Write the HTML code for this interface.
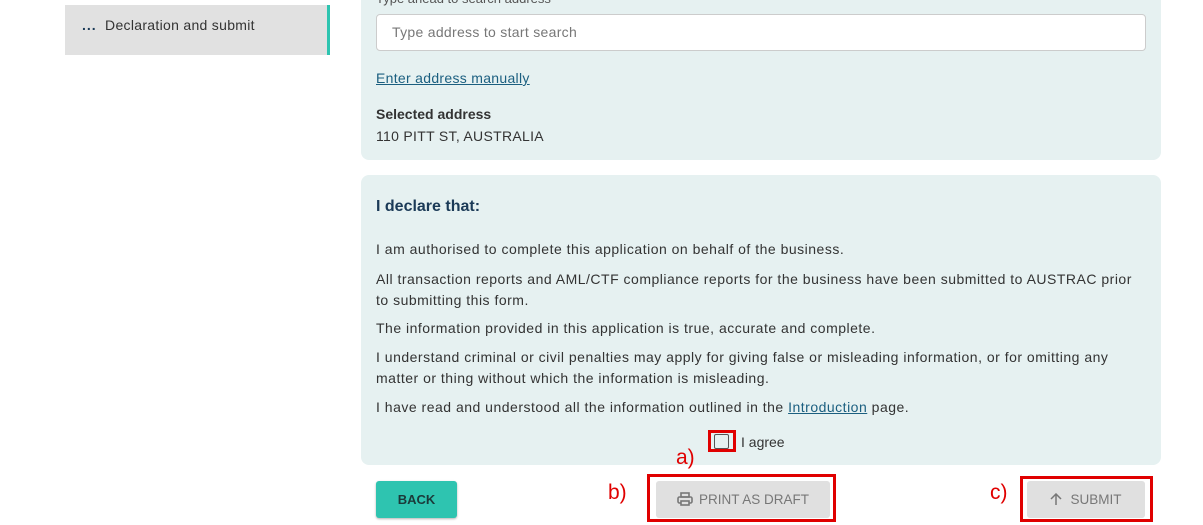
<!DOCTYPE html>
<html><head><style>
body{margin:0;width:1203px;height:525px;background:#fff;font-family:"Liberation Sans",sans-serif;position:relative;overflow:hidden;color:#333}
.a{position:absolute}
.panel{background:#e6f1f1;border-radius:8px}
p{margin:0;position:absolute;left:376px;font-size:14px;color:#333;line-height:21px;white-space:nowrap;letter-spacing:0.5px}
.red{border:3px solid #e00000;position:absolute;box-sizing:border-box}
.lab{position:absolute;color:#e00000;font-size:21px}
</style></head><body>
<div class="a" style="left:65px;top:5px;width:262px;height:50px;background:#e1e1e1"></div>
<div class="a" style="left:327px;top:5px;width:3px;height:50px;background:#2ec4b0"></div>
<div class="a" style="left:82px;top:17px;font-size:14px;color:#333;letter-spacing:0.3px"><b style="color:#1b3a57;letter-spacing:1px">...</b>&nbsp; Declaration and submit</div>

<div class="a panel" style="left:361px;top:-10px;width:800px;height:170px"></div>
<div class="a" style="left:376px;top:-9px;font-size:13px;color:#555">Type ahead to search address</div>
<div class="a" style="left:376px;top:14px;width:768px;height:35px;background:#fff;border:1px solid #ccc;border-radius:4px"></div>
<div class="a" style="left:392px;top:24px;font-size:14px;color:#777;letter-spacing:0.3px">Type address to start search</div>
<div class="a" style="left:376px;top:70px;font-size:14px;color:#1b5f80;text-decoration:underline;letter-spacing:0.3px">Enter address manually</div>
<div class="a" style="left:376px;top:106px;font-size:14px;font-weight:bold;color:#333">Selected address</div>
<div class="a" style="left:376px;top:128px;font-size:14px;color:#333;letter-spacing:0.3px">110 PITT ST, AUSTRALIA</div>

<div class="a panel" style="left:361px;top:175px;width:800px;height:290px"></div>
<div class="a" style="left:376px;top:198px;font-size:16px;font-weight:bold;color:#1b3a57">I declare that:</div>
<p style="top:239px">I am authorised to complete this application on behalf of the business.</p>
<p style="top:269px">All transaction reports and AML/CTF compliance reports for the business have been submitted to AUSTRAC prior<br>to submitting this form.</p>
<p style="top:318px">The information provided in this application is true, accurate and complete.</p>
<p style="top:347px">I understand criminal or civil penalties may apply for giving false or misleading information, or for omitting any<br>matter or thing without which the information is misleading.</p>
<p style="top:397px">I have read and understood all the information outlined in the <span style="color:#1b5f80;text-decoration:underline">Introduction</span> page.</p>
<div class="red" style="left:708px;top:430px;width:28px;height:22px"></div>
<div class="a" style="left:714px;top:434px;width:13px;height:13px;border:1.5px solid #555;border-radius:2px"></div>
<div class="a" style="left:741px;top:434px;font-size:14px">I agree</div>

<div class="a" style="left:376px;top:481px;width:81px;height:37px;background:#2ec4b0;border-radius:3px;box-shadow:0 1px 2px rgba(0,0,0,.3);font-size:13px;font-weight:bold;color:#1b3a3a;text-align:center;line-height:37px">BACK</div>
<div class="lab" style="left:676px;top:446px">a)</div>
<div class="lab" style="left:608px;top:481px">b)</div>
<div class="red" style="left:647px;top:474px;width:189px;height:48px"></div>
<div class="a" style="left:656px;top:481px;width:174px;height:37px;background:#e0e0e0;border-radius:3px;font-size:13.5px;color:#777;line-height:37px;text-align:center">
<svg width="16" height="14" viewBox="0 0 16 14" style="vertical-align:-2px;margin-right:6px"><rect x="4" y="1" width="8" height="4" fill="none" stroke="#777" stroke-width="1.6"/><rect x="1" y="5" width="14" height="6" rx="1.5" fill="none" stroke="#777" stroke-width="1.6"/><rect x="4" y="9" width="8" height="4" fill="#e0e0e0" stroke="#777" stroke-width="1.6"/></svg>PRINT AS DRAFT</div>
<div class="lab" style="left:990px;top:481px">c)</div>
<div class="red" style="left:1020px;top:476px;width:133px;height:46px"></div>
<div class="a" style="left:1027px;top:481px;width:118px;height:37px;background:#e0e0e0;border-radius:3px;font-size:13.5px;color:#777;line-height:37px;text-align:center">
<svg width="12" height="13" viewBox="0 0 12 13" style="vertical-align:-2px;margin-right:8px"><path d="M6 12V1M1 6L6 1L11 6" fill="none" stroke="#777" stroke-width="1.5"/></svg>SUBMIT</div>
</body></html>
